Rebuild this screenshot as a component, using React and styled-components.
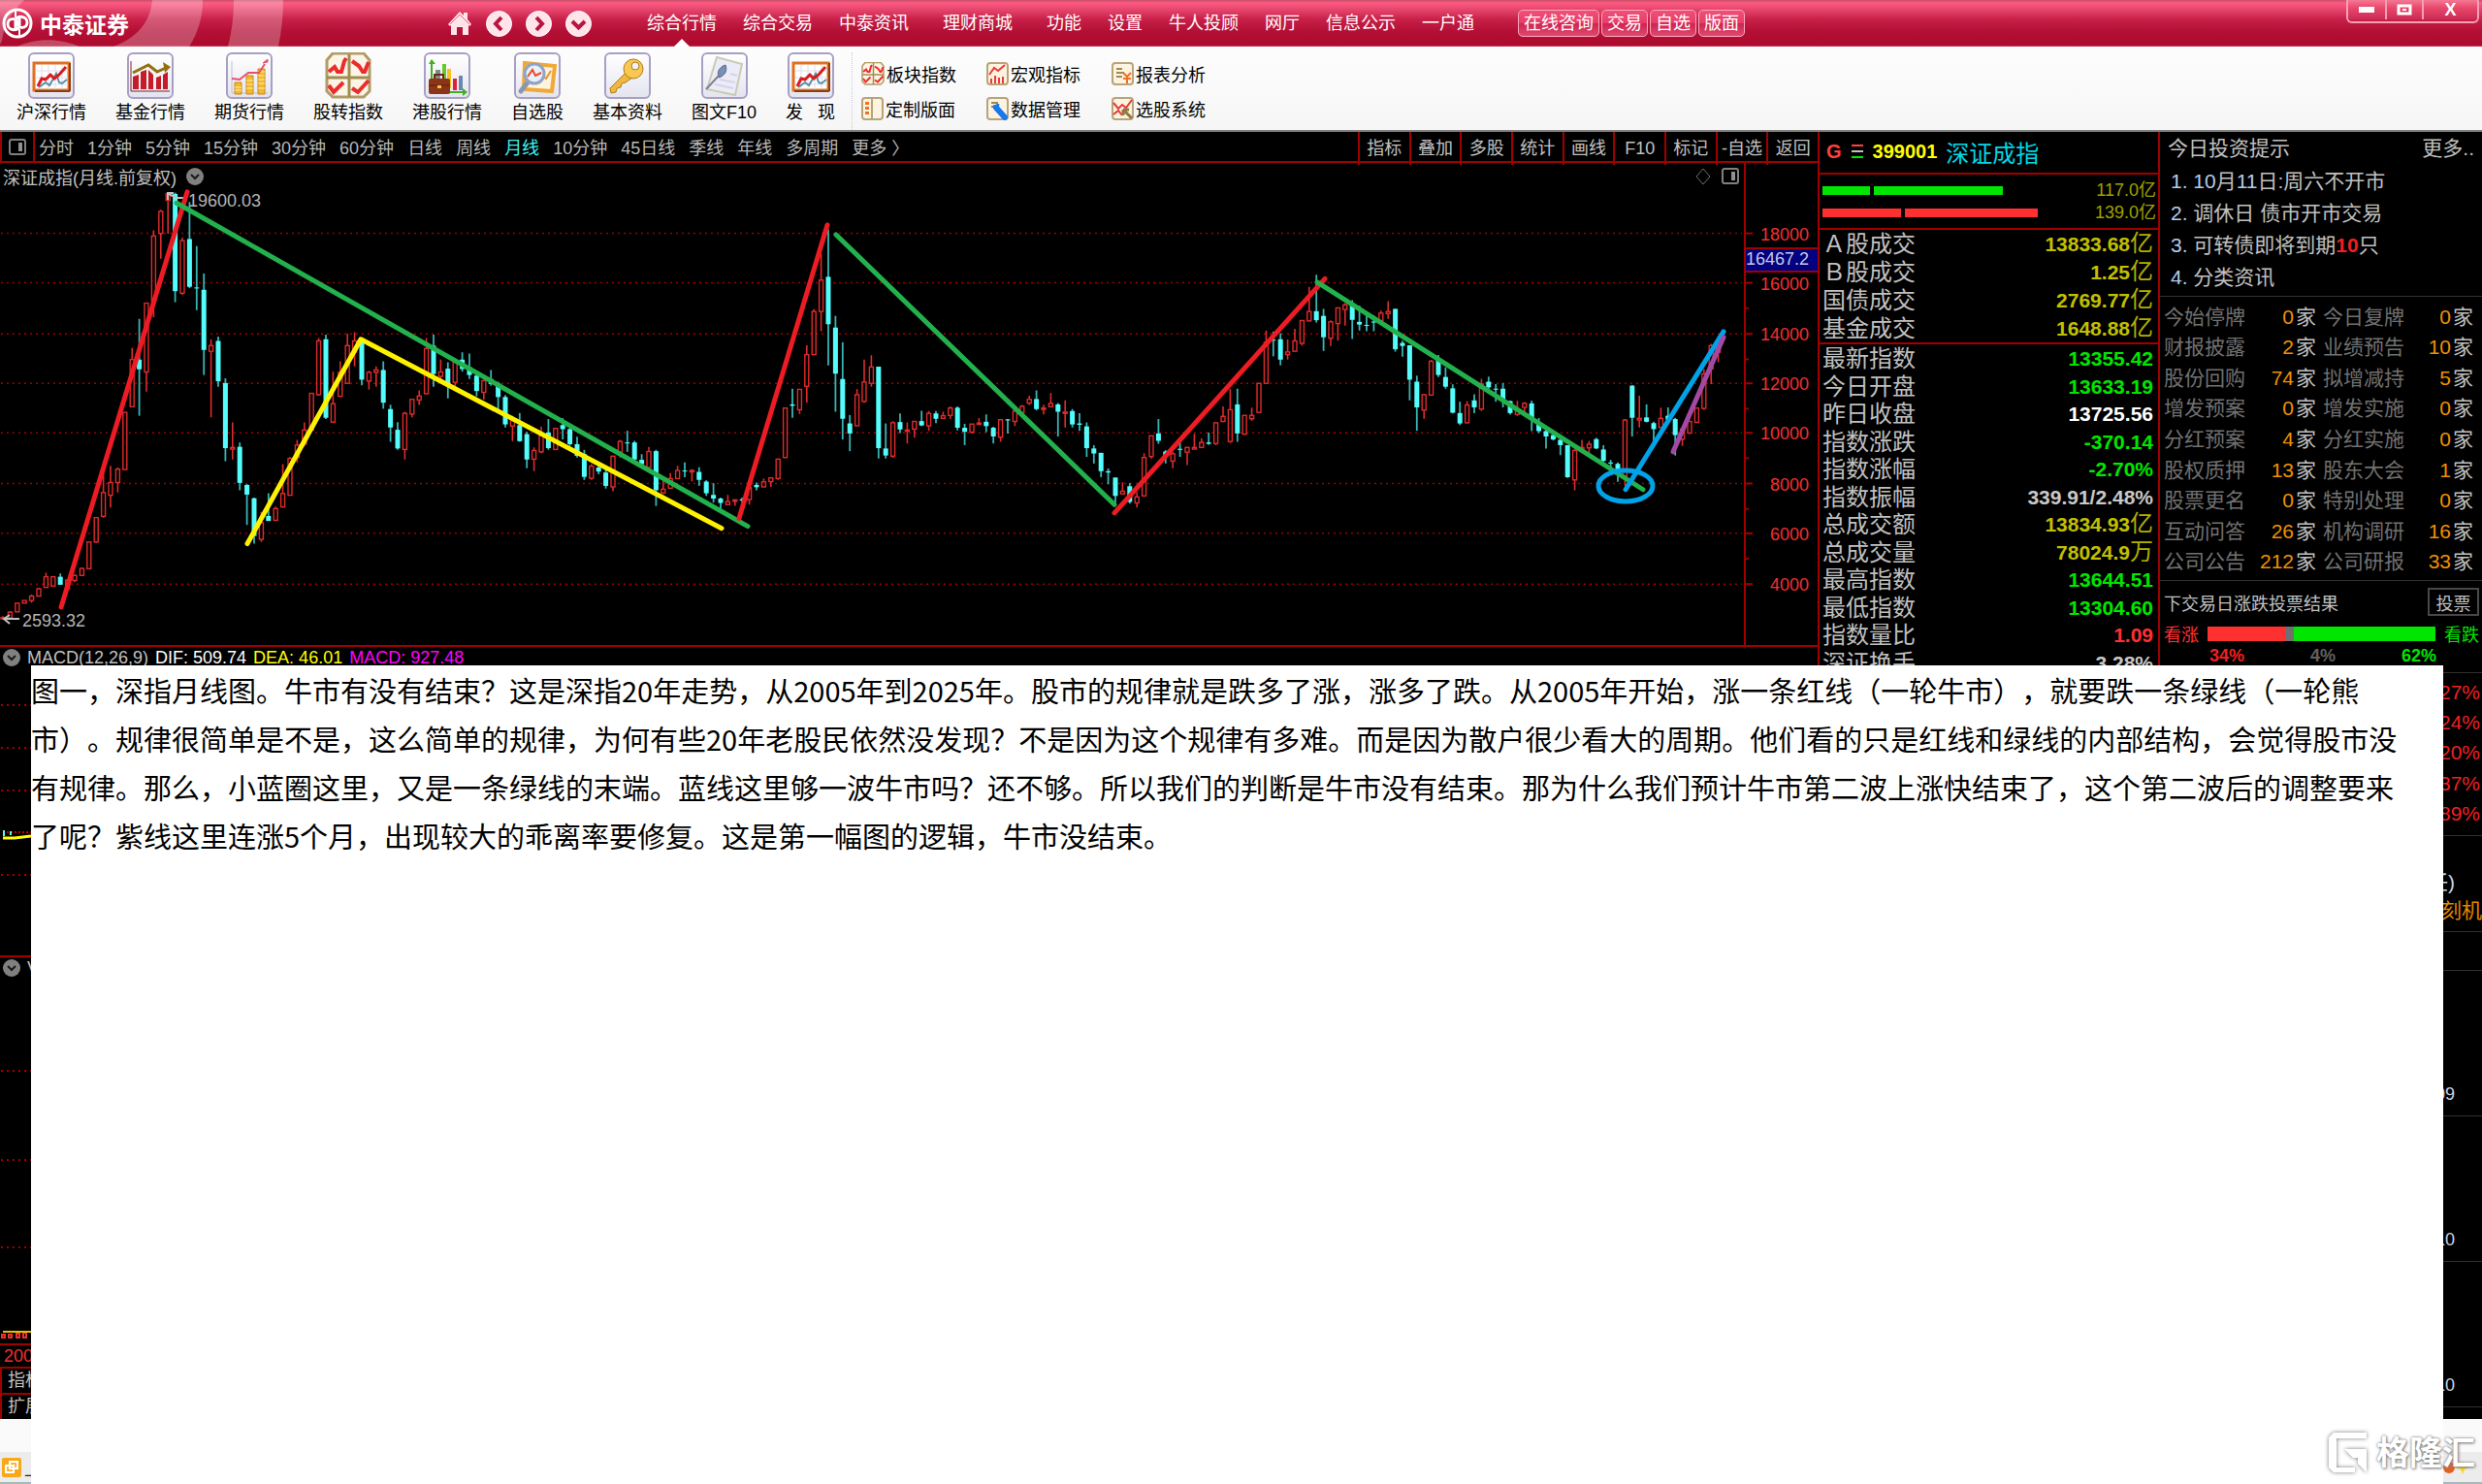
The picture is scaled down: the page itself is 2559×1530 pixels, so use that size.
import React from 'react';
import styled, { createGlobalStyle } from 'styled-components';

const GlobalStyle = createGlobalStyle`
  * { box-sizing: border-box; }
  body {
    margin: 0;
    background: #000;
    font-family: "Liberation Sans", "Noto Sans CJK SC", sans-serif;
    font-size: 18px;
    text-spacing-trim: space-all;
  }
  button {
    margin: 0;
    padding: 0;
    border: 0;
    background: none;
    font: inherit;
    color: inherit;
    white-space: nowrap;
  }
  a { color: inherit; text-decoration: none; }
  svg { display: block; flex: none; }
  table { border-collapse: collapse; }
  th, td { padding: 0; font-weight: normal; white-space: nowrap; }
`;

const line = '#a00000';

const Screen = styled.div`
  position: relative;
  display: flex;
  flex-direction: column;
  min-height: 100vh;
  overflow: hidden;
`;

/* ---------- title bar ---------- */

const TitleBar = styled.header`
  position: relative;
  display: flex;
  height: 48px;
  color: #fff;
  background: linear-gradient(#c4506c 0, #ff5a80 3px, #e84870 9px, #c82048 20px, #b41036 32px, #ac0a2c 46px, #c83058 48px);
`;

const Swoosh = styled.svg`
  position: absolute;
  left: 0;
  top: 0;
`;

const Brand = styled.div`
  position: relative;
  display: flex;
  align-items: center;
  gap: 7px;
  width: 461px;
  padding-left: 2px;
  font-size: 23px;
  font-weight: bold;
`;

const HomeButtons = styled.div`
  display: flex;
  align-items: center;
  gap: 14px;
  width: 206px;
`;

const Nav = styled.nav`
  display: flex;
  align-items: center;
  gap: 27px;
  height: 48px;
`;

const NavLink = styled.a`
  position: relative;
  padding: ${props => (props.$wide ? '0 8px' : '0')};
  line-height: 48px;
  &::after {
    content: "";
    display: ${props => (props.$active ? 'block' : 'none')};
    position: absolute;
    left: 50%;
    bottom: 0;
    margin-left: -8px;
    border: 8px solid transparent;
    border-top: 0;
    border-bottom-color: #fff;
  }
`;

const Pills = styled.div`
  display: flex;
  align-items: center;
  gap: 2px;
  margin-left: 45px;
`;

const Pill = styled.button`
  height: 28px;
  padding: 0 5px;
  border: 1px solid #f8a8bc;
  border-radius: 5px;
  background: linear-gradient(#f05078 0, #e83c68 50%, #cc2450 50%, #e04870 100%);
  line-height: 26px;
`;

const WindowButtons = styled.div`
  display: flex;
  height: 24px;
  margin-left: auto;
  margin-right: 3px;
  border: 2px solid #f4a0b4;
  border-top: 0;
  border-radius: 0 0 6px 6px;
`;

const WindowButton = styled.button`
  display: flex;
  align-items: center;
  justify-content: center;
  height: 20px;
  width: ${props => (props.$wide ? '57px' : '38px')};
  background: linear-gradient(#f47894 0, #e8486c 8px, #cc2c54 20px);
  font-size: 18px;
  font-weight: bold;
  & + & { border-left: 2px solid #f4a0b4; }
`;

/* ---------- toolbar ---------- */

const Toolbar = styled.div`
  display: flex;
  height: 88px;
  padding: 6px 0 0 17px;
  border-bottom: 2px solid #808080;
  background: linear-gradient(#fdfdfd, #f6f6f6);
  color: #000;
`;

const BigTools = styled.div`
  display: flex;
  gap: 30px;
  padding-right: 17px;
  border-right: 1px dotted #c8c8dc;
`;

const BigTool = styled.button`
  display: flex;
  flex-direction: column;
  align-items: center;
  white-space: pre;
  line-height: 28px;
`;

const ToolFrame = styled.span`
  display: flex;
  align-items: center;
  justify-content: center;
  width: 48px;
  height: 48px;
  border: ${props => (props.$bare ? '0' : '2px solid #a8a0c4')};
  border-radius: 6px;
  background: ${props => (props.$bare ? 'none' : 'linear-gradient(#fff, #e4e4f0)')};
`;

const SmallTools = styled.div`
  display: grid;
  grid-template-columns: repeat(3, 101px);
  grid-template-rows: 36px 36px;
  column-gap: 28px;
  padding: 4px 0 0 9px;
`;

const SmallTool = styled.button`
  display: flex;
  align-items: center;
  gap: 2px;
`;

/* ---------- body ---------- */

const Body = styled.main`
  display: flex;
  height: 1327px;
  color: #c0c0c0;
`;

const ChartColumn = styled.section`
  display: flex;
  flex: 1;
  flex-direction: column;
  min-width: 0;
`;

const PeriodBar = styled.div`
  display: flex;
  height: 32px;
  border-bottom: 2px solid ${line};
  line-height: 34px;
`;

const LayoutButton = styled.button`
  display: flex;
  align-items: center;
  justify-content: center;
  width: 36px;
  border: solid ${line};
  border-width: 0 2px;
`;

const Periods = styled.div`
  display: flex;
  flex: 1;
  gap: 14px;
  padding-left: 4px;
`;

const Period = styled.button`
  color: ${props => (props.$active ? '#40f0f0' : '#b8b8b8')};
`;

const ChartTools = styled.div`
  display: grid;
  grid-template-columns: repeat(9, 1fr);
  width: 474px;
`;

const ChartTool = styled.button`
  border-left: 2px solid ${line};
`;

const PlotRow = styled.div`
  position: relative;
  display: flex;
  height: 497px;
`;

const PlotTitle = styled.div`
  position: absolute;
  left: 3px;
  top: 0;
  display: flex;
  align-items: center;
  gap: 10px;
  height: 28px;
`;

const PlotTools = styled.div`
  position: absolute;
  right: 81px;
  top: 5px;
  display: flex;
  gap: 10px;
`;

const Plot = styled.svg`
  flex: 1;
  min-width: 0;
  width: 100%;
`;

const Axis = styled.svg`
  width: 76px;
`;

const SubPanel = styled.div`
  height: ${props => props.$height}px;
  border-top: 2px solid ${line};
`;

const SubTitle = styled.div`
  display: flex;
  align-items: center;
  gap: 7px;
  height: 22px;
  margin-bottom: 3px;
  padding-left: 3px;
`;

const DateRow = styled.div`
  height: 24px;
  padding-left: 4px;
  border-top: 2px solid ${line};
  color: #f03030;
  line-height: 22px;
`;

const TabRow = styled.div`
  height: 27px;
  padding-left: 6px;
  border: 2px solid ${line};
  border-bottom: 0;
  line-height: 24px;
`;

const Quote = styled.section`
  width: 351px;
  border-left: 2px solid ${line};
`;

const QuoteHead = styled.h1`
  display: flex;
  align-items: center;
  gap: 9px;
  height: 42px;
  margin: 0;
  padding: 0 0 2px 7px;
  font-size: 24px;
  font-weight: normal;
  color: #00d8e8;
`;

const Code = styled.span`
  font-size: 20px;
  font-weight: bold;
  color: ${props => props.$color};
`;

const Flows = styled.div`
  height: 59px;
  padding: 5px 2px 0 3px;
  border: solid ${line};
  border-width: 2px 0;
`;

const Flow = styled.div`
  display: flex;
  align-items: center;
  gap: 4px;
  height: 23px;
  color: #a0a000;
`;

const FlowBar = styled.span`
  width: ${props => props.$width}px;
  height: 9px;
  background: ${props => props.$color};
`;

const FlowValue = styled.span`
  margin-left: auto;
  padding-bottom: 6px;
`;

const QuoteTable = styled.table`
  width: 100%;
  height: ${props => props.$height}px;
  border-bottom: 2px solid ${line};
  th {
    padding: 2px 0 0 3px;
    font-size: 24px;
    line-height: 26px;
    text-align: left;
  }
  td {
    padding: 2px 5px 0 0;
    font-size: 21px;
    line-height: 26px;
    text-align: right;
  }
`;

const Value = styled.b`
  color: ${props => props.$color};
`;

const Unit = styled.span`
  font-size: 24px;
  line-height: 24px;
  color: #b0b000;
`;

const Info = styled.aside`
  width: 334px;
  border-left: 2px solid ${line};
  font-size: 21px;
  overflow: hidden;
`;

const InfoHead = styled.div`
  display: flex;
  justify-content: space-between;
  height: 34px;
  padding: 0 8px;
  line-height: 34px;
`;

const Tips = styled.ol`
  margin: 0;
  padding: 0 0 3px 11px;
  border-bottom: 1px solid #303030;
  list-style: none;
  line-height: 33px;
`;

const Num = styled.span`
  color: ${props => props.$color || '#b4ccec'};
`;

const Count = styled.span`
  margin-right: 2px;
  color: #f09000;
`;

const Stats = styled.div`
  padding: 5px 9px 3px 4px;
  border-bottom: 1px solid #303030;
  table {
    width: 100%;
    height: 284px;
  }
  th {
    width: 84px;
    color: #707070;
    text-align: left;
    line-height: 30px;
  }
  td {
    color: #c0c0c0;
    text-align: right;
    line-height: 30px;
  }
  td:nth-child(2) {
    width: 80px;
    padding-right: 7px;
  }
`;

const Vote = styled.div`
  height: 95px;
  padding: 0 3px 0 4px;
  border-bottom: 1px solid #303030;
  font-size: 18px;
`;

const VoteHead = styled.div`
  display: flex;
  align-items: center;
  justify-content: space-between;
  height: 43px;
`;

const VoteButton = styled.button`
  width: 53px;
  height: 29px;
  border: 2px solid #484848;
`;

const VoteBar = styled.div`
  display: flex;
  align-items: center;
  justify-content: space-between;
  height: 22px;
  color: #ff3030;
`;

const Meter = styled.div`
  width: 235px;
  height: 15px;
  background: linear-gradient(90deg, #ff3030 34%, #707070 34%, #707070 38%, #00e600 38%);
`;

const VoteNumbers = styled.div`
  display: flex;
  justify-content: space-between;
  height: 24px;
  padding: 0 44px 0 47px;
  line-height: 24px;
  font-weight: bold;
`;

const Movers = styled.div`
  display: grid;
  grid-template-rows: repeat(5, 1fr);
  align-items: center;
  height: 168px;
  padding: 4px 2px 6px;
  border-bottom: 1px solid #303030;
  color: #f02020;
  text-align: right;
`;

const InfoBox = styled.div`
  display: flex;
  flex-direction: column;
  justify-content: flex-end;
  height: ${props => props.$height}px;
  padding: 0 ${props => props.$pad || 0}px 7px 0;
  border-bottom: 1px solid #303030;
  font-size: ${props => (props.$pad ? 18 : 21)}px;
  line-height: 29px;
  text-align: right;
  color: #c8d4e4;
`;

const HotWord = styled.span`
  color: #e08800;
`;

const HotTag = styled.span`
  padding-right: 28px;
`;

/* ---------- bottom ---------- */

const StatusBar = styled.div`
  height: 34px;
  background: #fafafa;
`;

const TaskBar = styled.footer`
  display: flex;
  align-items: center;
  justify-content: space-between;
  height: 33px;
  padding: 0 12px 0 2px;
  border-bottom: 2px solid #a8b8b8;
  background: #ececec;
  color: #202020;
`;

const Task = styled.button`
  display: flex;
  align-items: center;
  gap: 3px;
`;

/* Sheet with the commentary, lies over the terminal */
const Note = styled.article`
  position: absolute;
  top: 686px;
  left: 32px;
  right: 40px;
  bottom: 0;
  padding: 0 32px 0 0;
  background: #fff;
  color: #000;
  font-family: "Noto Sans CJK SC", sans-serif;
  font-size: 29px;
  line-height: 50px;
  p { margin: 0; }
`;

const Watermark = styled.div`
  position: absolute;
  right: 7px;
  bottom: 8px;
  display: flex;
  align-items: center;
  gap: 8px;
  color: #fff;
  font-size: 34px;
  font-weight: bold;
  line-height: 48px;
  text-shadow: 0 0 3px #777, 1px 1px 3px #888;
  svg { filter: drop-shadow(0 0 2px #777); }
`;

/* ---------- data ---------- */

const navItems = ['综合行情', '综合交易', '中泰资讯', '理财商城', '功能', '设置', '牛人投顾', '网厅', '信息公示', '一户通'];
const pills = ['在线咨询', '交易', '自选', '版面'];
const periods = ['分时', '1分钟', '5分钟', '15分钟', '30分钟', '60分钟', '日线', '周线', '月线', '10分钟', '45日线', '季线', '年线', '多周期', '更多 〉'];
const chartTools = ['指标', '叠加', '多股', '统计', '画线', 'F10', '标记', '-自选', '返回'];

const green = '#00e600';
const gold = '#c0c000';

const turnover = [
  ['Ａ股成交', '13833.68', gold, '亿'],
  ['Ｂ股成交', '1.25', gold, '亿'],
  ['国债成交', '2769.77', gold, '亿'],
  ['基金成交', '1648.88', gold, '亿'],
];

const quotes = [
  ['最新指数', '13355.42', green],
  ['今日开盘', '13633.19', green],
  ['昨日收盘', '13725.56', '#fff'],
  ['指数涨跌', '-370.14', green],
  ['指数涨幅', '-2.70%', green],
  ['指数振幅', '339.91/2.48%', '#c8c8c8'],
  ['总成交额', '13834.93', gold, '亿'],
  ['总成交量', '78024.9', gold, '万'],
  ['最高指数', '13644.51', green],
  ['最低指数', '13304.60', green],
  ['指数量比', '1.09', '#ff3030'],
  ['深证换手', '3.28%', '#c8c8c8'],
];

const stats = [
  ['今始停牌', 0, '今日复牌', 0],
  ['财报披露', 2, '业绩预告', 10],
  ['股份回购', 74, '拟增减持', 5],
  ['增发预案', 0, '增发实施', 0],
  ['分红预案', 4, '分红实施', 0],
  ['股权质押', 13, '股东大会', 1],
  ['股票更名', 0, '特别处理', 0],
  ['互动问答', 26, '机构调研', 16],
  ['公司公告', 212, '公司研报', 33],
];

const movers = ['0.27%', '0.24%', '0.20%', '0.37%', '0.89%'];

// monthly bars: rising (1) or falling (0), high, body top, body bottom, low
const bars = [
  [1,1380,1384,1388,1390],[1,1365,1368,1385,1388],[1,1341,1341,1367,1367],[1,1333,1333,1341,1341],[1,1315,1320,1333,1340],
  [1,1295,1298,1320,1320],[1,1250,1262,1294,1294],[1,1262,1262,1290,1290],[0,1252,1262,1286,1286],[1,1270,1272,1298,1300],
  [1,1255,1258,1273,1278],[1,1235,1237,1258,1258],[1,1158,1158,1238,1238],[1,1083,1085,1158,1160],[1,940,1010,1081,1085],
  [1,930,980,1018,1055],[1,935,940,980,1010],[1,770,770,941,941],[1,577,612,753,753],[0,490,612,641,780],
  [1,443,443,649,708],[1,225,242,440,485],[1,163,168,234,310],[1,112,115,135,235],[0,112,116,407,440],
  [1,247,256,413,418],[0,140,251,394,398],[0,272,396,398,464],[0,354,403,583,658],[1,552,570,587,785],
  [0,543,556,677,693],[0,668,682,877,916],[1,800,875,880,911],[0,860,873,981,1003],[0,985,987,1016,1107],
  [0,1025,1027,1140,1163],[1,1068,1100,1150,1158],[0,1012,1080,1095,1095],[1,1052,1058,1093,1093],[1,925,1013,1053,1055],
  [1,903,908,1018,1018],[1,852,868,905,920],[1,800,823,865,870],[1,712,713,823,823],[1,547,556,717,720],
  [0,537,551,786,790],[1,648,744,799,802],[1,617,650,722,722],[1,534,570,683,683],[1,530,556,590,632],
  [0,550,556,672,689],[1,645,650,676,702],[1,632,643,650,693],[0,617,643,741,759],[0,747,760,815,858],
  [0,799,822,878,882],[1,768,773,881,911],[1,731,731,775,785],[1,704,721,733,748],[1,547,579,714,714],
  [0,537,570,655,693],[1,612,649,662,680],[0,620,639,690,728],[1,608,620,680,693],[0,590,612,640,648],
  [0,594,635,658,670],[0,655,660,706,722],[1,672,675,710,732],[0,643,670,685,690],[0,678,683,724,762],
  [0,718,724,806,815],[1,780,795,811,856],[0,772,808,856,858],[0,828,835,911,937],[1,875,884,910,946],
  [1,812,840,888,892],[0,790,830,877,882],[1,818,818,881,881],[0,787,808,820,851],[0,815,820,865,870],
  [0,843,865,900,905],[0,882,895,963,972],[1,925,931,967,972],[0,925,935,947,955],[0,930,950,990,998],
  [1,901,901,993,1006],[1,852,857,889,905],[0,825,860,862,888],[0,855,860,911,920],[0,895,912,925,935],
  [1,873,887,935,935],[0,882,886,1003,1050],[1,975,1000,1011,1015],[1,952,968,997,997],[1,930,944,968,968],
  [0,920,944,946,964],[1,940,944,948,976],[0,934,948,972,990],[0,973,977,1012,1020],[0,982,1017,1028,1040],
  [0,1025,1028,1041,1058],[1,1017,1037,1046,1046],[1,1030,1032,1036,1050],[0,1025,1030,1034,1040],[1,985,995,1031,1046],
  [0,980,987,994,1003],[1,968,978,993,993],[1,965,966,977,993],[1,908,910,968,972],[1,757,757,905,907],
  [0,699,746,750,786],[1,701,701,762,775],[1,569,597,692,741],[1,461,468,597,597],[1,295,374,468,527],
  [0,222,364,506,629],[0,481,516,654,768],[0,560,670,789,851],[0,778,803,833,886],[1,700,717,810,810],
  [1,612,679,737,741],[1,599,634,683,693],[0,633,633,877,908],[0,803,878,899,908],[1,796,801,901,907],
  [0,773,799,821,832],[1,800,823,825,863],[1,796,797,820,846],[0,765,796,809,811],[1,766,773,810,825],
  [0,766,773,789,802],[1,768,780,788,788],[1,752,757,779,789],[0,752,756,816,824],[0,804,816,828,868],
  [1,804,805,829,833],[1,787,802,806,806],[0,776,798,811,829],[0,813,816,842,863],[1,792,792,844,858],
  [0,790,791,794,833],[1,766,766,797,811],[1,748,752,770,772],[1,720,731,742,748],[0,704,730,760,764],
  [1,747,757,761,776],[1,712,743,753,753],[0,742,746,768,842],[1,734,769,773,815],[0,760,766,806,815],
  [0,772,803,807,825],[0,800,812,877,903],[0,868,878,893,923],[0,891,891,946,964],[0,938,946,950,985],
  [0,965,965,1020,1050],[1,979,1006,1014,1016],[0,982,991,1038,1043],[1,1008,1023,1041,1055],[1,892,905,1020,1020],
  [1,840,840,902,908],[0,790,833,855,864],[0,883,887,900,923],[1,888,894,916,937],[0,860,879,882,903],
  [1,873,875,889,928],[1,834,875,880,880],[1,848,860,875,877],[0,830,860,864,867],[1,801,801,863,868],
  [1,752,782,797,799],[1,700,762,857,862],[0,699,746,833,858],[1,779,779,835,838],[1,756,779,789,795],
  [1,683,683,770,770],[1,525,560,683,683],[0,528,552,555,602],[0,533,551,612,629],[1,552,589,597,612],
  [1,520,556,587,589],[1,495,495,563,570],[1,394,468,496,498],[0,358,467,494,501],[0,460,481,545,586],
  [1,494,499,548,571],[1,457,457,504,555],[1,443,448,462,510],[0,434,445,493,550],[0,450,499,507,525],
  [0,470,508,510,527],[0,480,498,501,527],[1,465,473,495,497],[1,437,468,474,490],[0,460,460,581,588],
  [0,555,562,571,603],[0,569,569,672,734],[0,660,678,755,825],[1,715,717,763,789],[1,613,617,718,720],
  [0,598,612,658,664],[0,635,664,693,699],[0,686,698,771,773],[0,738,772,803,808],[1,736,748,801,803],
  [0,716,734,755,772],[1,669,685,760,765],[0,663,678,695,700],[0,685,699,702,738],[0,682,699,735,755],
  [0,735,736,772,777],[1,735,765,776,780],[1,739,743,755,768],[0,735,743,790,826],[0,787,800,826,832],
  [0,820,826,842,878],[0,828,838,851,854],[0,850,852,868,898],[0,868,868,964,966],[1,878,884,972,1003],
  [1,852,875,880,890],[1,855,865,876,892],[0,846,850,878,880],[0,868,881,915,920],[0,912,920,923,936],
  [0,920,924,957,978],[1,790,793,960,990],[0,688,690,786,842],[1,720,788,793,815],[0,746,785,798,800],
  [0,798,802,820,870],[1,756,788,815,815],[0,755,780,792,800],[0,786,790,838,899],[1,818,820,850,870],
  [1,795,797,832,834],[1,755,757,800,802],[1,640,655,758,763],[1,565,570,640,685],[1,540,560,590,620],
];

const levels = [
  [234, 18000], [382, 16000], [535, 14000], [683, 12000],
  [831, 10000], [983, 8000], [1132, 6000], [1284, 4000],
];

const trends = [
  ['#ed1c24', [[63, 1353], [193, 110]]],
  ['#22b14c', [[182, 143], [771, 1111]]],
  ['#fff200', [[255, 1163], [372, 551], [744, 1117]]],
  ['#ed1c24', [[762, 1087], [853, 209]]],
  ['#22b14c', [[862, 238], [1149, 1046]]],
  ['#ed1c24', [[1149, 1071], [1366, 370]]],
  ['#22b14c', [[1358, 380], [1694, 1001]]],
  ['#00a2e8', [[1676, 1001], [1777, 528]]],
  ['#a349a4', [[1725, 888], [1777, 545]]],
];

const toX = i => 3 + i * 7.4;
const toY = v => v * 0.3444 - 8;

/* ---------- drawings ---------- */

function ArrowBadge() {
  return (
    <svg width="18" height="18" viewBox="0 0 18 18">
      <circle cx="9" cy="9" r="9" fill="#808080" />
      <path d="M5 7l4 4 4-4" fill="none" stroke="#181818" strokeWidth="2" />
    </svg>
  );
}

function PanelIcon() {
  return (
    <svg width="18" height="17" viewBox="0 0 18 17">
      <rect x="1" y="1" width="16" height="15" rx="2" fill="none" stroke="#808080" strokeWidth="2" />
      <rect x="10" y="4" width="4" height="9" fill="#909090" />
    </svg>
  );
}

function RoundIcon({ d }) {
  return (
    <svg width="27" height="27" viewBox="0 0 27 27">
      <circle cx="13.5" cy="13.5" r="13" fill="#ffe4ea" stroke="#fff" />
      <path d={d} fill="none" stroke="#b81440" strokeWidth="4" />
    </svg>
  );
}

function BoardChart() {
  return (
    <svg width="44" height="44" viewBox="0 0 44 44">
      <rect x="4" y="9" width="36" height="28" fill="#fff" stroke="#e07020" strokeWidth="3" />
      <path d="M5 38h36M41 9v29" stroke="#8c4010" strokeWidth="2" />
      <path d="M12 11v25M19 11v25M26 11v25M33 11v25M6 17h33M6 24h33M6 31h33" stroke="#dde" />
      <path d="M9 34l7-5 4 3 7-12 3 9 3 1 5-4" fill="none" stroke="#5890a8" strokeWidth="2" />
      <path d="M8 33l4-8 4 1 5-5 4 4 5-4 7-8" fill="none" stroke="#d81c1c" strokeWidth="3" />
    </svg>
  );
}

function FundChart() {
  return (
    <svg width="44" height="44" viewBox="0 0 44 44">
      <path d="M2 7v31h40" fill="none" stroke="#802020" />
      <path d="M4 23l6-2v15H4zM12 18l6-2v20h-6zM20 16l5 5v15h-5zM28 24l5-2v14h-5zM35 21l5-3v18h-5z" fill="#c41c28" />
      <path d="M4 19l16-8 9 7 11-5" fill="none" stroke="#907010" strokeWidth="3" />
      <path d="M35 8l8 5-6 6z" fill="#907010" />
    </svg>
  );
}

function FutureChart() {
  return (
    <svg width="44" height="44" viewBox="0 0 44 44">
      <path d="M4 7v33h37" fill="none" stroke="#c0c0d0" />
      <path d="M7 29h7v12H7zM19 22h7v19h-7zM31 15h7v26h-7z" fill="#f4b830" stroke="#c88810" />
      <path d="M7 34h7M7 37h7M19 27h7M19 31h7M19 35h7M31 18h7M31 22h7M31 26h7M31 30h7M31 35h7" stroke="#fff0a0" />
      <path d="M4 25l8 1 9-7h11l6-9" fill="none" stroke="#e85070" strokeWidth="2" />
      <path d="M36 9l5-1v-3z" fill="#e85070" stroke="#e85070" />
    </svg>
  );
}

function FourCharts({ size = 48 }) {
  return (
    <svg width={size} height={size} viewBox="0 0 48 48">
      <path d="M8 1h32l6 7v32l-6 6H8l-6-6V8z" fill="#fcf4e4" stroke="#b09c68" strokeWidth="3" />
      <path d="M25 2v44M2 26h44" stroke="#a08c50" strokeWidth="3" />
      <path d="M4 20l6-5 3 5h4l3-11 2-3M28 9l7 5 4 6h2l4-10M4 34l5 7 10-10M28 37l6 4 11-12" fill="none" stroke="#ec2c2c" strokeWidth="4" />
    </svg>
  );
}

function CaseChart() {
  return (
    <svg width="44" height="44" viewBox="0 0 44 44">
      <path d="M6 6v33h34" fill="none" stroke="#40b020" strokeWidth="2" />
      <path d="M3 10l3-5 4 5zM38 35l5 4-5 4z" fill="#40b020" />
      <path d="M10 16h5v10h-5z" fill="#808890" />
      <path d="M17 10h4v16h-4z" fill="#68c828" />
      <path d="M22 15h4v20h-4z" fill="#f8c020" />
      <path d="M28 25h4v12h-4z" fill="#e02038" />
      <path d="M34 22h4v15h-4z" fill="#6888b0" />
      <rect x="3" y="25" width="22" height="16" rx="2" fill="#8c3418" />
      <path d="M9 25v-4h9v4" fill="none" stroke="#702810" strokeWidth="2" />
      <path d="M3 32h22" stroke="#601c08" />
      <path d="M12 32h4v3h-4z" fill="#f0c840" />
    </svg>
  );
}

function LensChart() {
  return (
    <svg width="44" height="44" viewBox="0 0 44 44">
      <path d="M9 9l31 3-3 26-29-2z" fill="#fff4dc" stroke="#f0a838" strokeWidth="4" />
      <path d="M22 29l5-7 4 3 5-8" fill="none" stroke="#f09030" strokeWidth="2" />
      <path d="M5 38l7-9" stroke="#8898b0" strokeWidth="5" strokeLinecap="round" />
      <circle cx="19" cy="20" r="10" fill="#e8f0fc" stroke="#90a4c4" strokeWidth="3" />
      <path d="M12 23l5-7 3 6 6-3" fill="none" stroke="#f04820" strokeWidth="2" />
    </svg>
  );
}

function KeyIcon() {
  return (
    <svg width="44" height="44" viewBox="0 0 44 44">
      <path d="M22 17L4 35l1 5 5-1 1-4 4-1 1-4 4-1 7-5" fill="#f0b840" stroke="#b07c18" />
      <circle cx="28" cy="15" r="10" fill="#f8c850" stroke="#b07c18" />
      <circle cx="30" cy="12" r="4" fill="#f0f0f8" stroke="#b07c18" />
    </svg>
  );
}

function PenNote() {
  return (
    <svg width="44" height="44" viewBox="0 0 44 44">
      <path d="M14 3l26 7-7 32-29-6z" fill="#ececf8" stroke="#c8ccb4" strokeWidth="2" />
      <path d="M12 31l19 4M17 26l16 3M28 20l7 2" stroke="#d4d4e8" strokeWidth="2" />
      <path d="M23 11c-7 2-9 8-7 13 7-2 9-8 7-13z" fill="#7890b4" stroke="#50648c" />
      <path d="M17 21L3 36" stroke="#808090" strokeWidth="2" />
    </svg>
  );
}

const bigTools = [
  ['沪深行情', BoardChart], ['基金行情', FundChart], ['期货行情', FutureChart],
  ['股转指数', FourCharts], ['港股行情', CaseChart], ['自选股', LensChart],
  ['基本资料', KeyIcon], ['图文F10', PenNote], ['发   现', BoardChart],
];

function SmallIcon({ children }) {
  return (
    <svg width="23" height="24" viewBox="0 0 23 24">
      <rect x="1" y="1" width="21" height="22" rx="3" fill="#fcf4e0" stroke="#b8a478" strokeWidth="2" />
      {children}
    </svg>
  );
}

const smallTools = [
  ['板块指数', <FourCharts key="a" size={24} />],
  ['宏观指标', <SmallIcon key="b"><path d="M3 13l5-7 4 3 7-6M5 22v-5M9 22v-8M13 22v-6M17 22v-7" fill="none" stroke="#f03838" strokeWidth="2" /></SmallIcon>],
  ['报表分析', <SmallIcon key="c"><path d="M5 7h6M5 11h8M5 15h6" stroke="#a08850" strokeWidth="2" /><path d="M12 11l4 4 4-4M16 15v7M12 17h8" fill="none" stroke="#f07020" strokeWidth="2" /></SmallIcon>],
  ['定制版面', <SmallIcon key="d"><path d="M11 2v20" stroke="#b8a478" strokeWidth="2" /><path d="M6 5v14" stroke="#f07020" strokeWidth="4" strokeDasharray="3 2" /></SmallIcon>],
  ['数据管理', <SmallIcon key="e"><path d="M5 6h7M5 10h5" stroke="#a08850" strokeWidth="2" /><path d="M10 11l9 10" stroke="#1878f0" strokeWidth="6" strokeLinecap="round" /><path d="M7 9l4 3 1-5" fill="none" stroke="#1878f0" strokeWidth="3" /></SmallIcon>],
  ['选股系统', <SmallIcon key="f"><path d="M2 6l5 6 4-4 4 3 6-8M2 18l5-4 4 5" fill="none" stroke="#e83838" strokeWidth="2" /><path d="M12 13l9 9M12 13v6M12 13h6" stroke="#907840" strokeWidth="3" /></SmallIcon>],
];

function Candle({ index, bar }) {
  const [up, high, top, bottom, low] = bar;
  const x = toX(index);
  const bodyHeight = Math.max(toY(bottom) - toY(top), 1);
  if (up) {
    return (
      <g stroke="#dc2c2c">
        <path d={`M${x} ${toY(high)}V${toY(top)}M${x} ${toY(bottom)}V${toY(low)}`} strokeWidth="1.6" />
        <rect x={x - 2} y={toY(top)} width="4" height={bodyHeight} fill="#000" strokeWidth="1.4" />
      </g>
    );
  }
  return (
    <g>
      <path d={`M${x} ${toY(high)}V${toY(low)}`} stroke="#38b4b4" strokeWidth="1.8" />
      <rect x={x - 2.5} y={toY(top)} width="5" height={bodyHeight} fill="#54fcfc" />
    </g>
  );
}

function PriceChart() {
  return (
    <PlotRow>
      <Plot viewBox="0 0 1798 497" preserveAspectRatio="none" height="497">
        {levels.map(([v]) =>
          <path key={v} d={`M1 ${toY(v)}H1796`} stroke="#a00000" strokeWidth="1.5" strokeDasharray="2 4" />
        )}
        {bars.map((bar, idx) => <Candle key={idx} index={idx} bar={bar} />)}
        <g fill="none" stroke="#c0c0c0" strokeWidth="2">
          <path d="M179 31h-6v7M174 32l8 4h11" />
          <path d="M10 466l-6 4 6 5M4 470h16" />
        </g>
        <g fill="#b4b4b4" fontSize="18">
          <text x="194" y="45">19600.03</text>
          <text x="23" y="478">2593.32</text>
        </g>
        {trends.map(([color, points], idx) =>
          <polyline
            key={idx}
            points={points.map(([x, v]) => `${x},${toY(v)}`).join(' ')}
            fill="none" stroke={color} strokeWidth="5" strokeLinecap="round" strokeLinejoin="round"
          />
        )}
        <ellipse cx="1676" cy={toY(990)} rx="28" ry="16" fill="none" stroke="#00a2e8" strokeWidth="5" />
      </Plot>
      <Axis viewBox="0 0 76 497" height="497">
        <path d="M1 0V497" stroke={line} strokeWidth="2" />
        {levels.map(([v, price]) =>
          <g key={price}>
            <path d={`M1 ${toY(v)}h8`} stroke={line} strokeWidth="2" />
            {v > 300 && v < 1284 && <path d={`M1 ${toY(v + 76)}h4`} stroke={line} strokeWidth="2" />}
            <text x="67" y={toY(v) + 7} fill="#f03030" fontSize="18" textAnchor="end">{price}</text>
          </g>
        )}
        <rect x="1" y="88" width="76" height="24" fill="#000080" stroke={line} strokeWidth="2" />
        <text x="67" y="105" fill="#c8c8e0" fontSize="18" textAnchor="end">16467.2</text>
      </Axis>
      <PlotTitle>深证成指(月线.前复权)<ArrowBadge /></PlotTitle>
      <PlotTools>
        <svg width="18" height="18" viewBox="0 0 18 18">
          <path d="M9 1l7 8-7 8-7-8z" fill="none" stroke="#707070" />
        </svg>
        <PanelIcon />
      </PlotTools>
    </PlotRow>
  );
}

function QuoteRows({ rows, height }) {
  return (
    <QuoteTable $height={height}>
      <tbody>
        {rows.map(([label, value, color, unit]) =>
          <tr key={label}>
            <th scope="row">{label}</th>
            <td><Value $color={color}>{value}</Value>{unit && <Unit>{unit}</Unit>}</td>
          </tr>
        )}
      </tbody>
    </QuoteTable>
  );
}

function Header() {
  return (
    <TitleBar>
      <Swoosh width="300" height="48" viewBox="0 0 300 48" fill="#fff" fillOpacity="0.26">
        <path d="M0 0h25C12 12 4 26 2 42l-2 4z" />
        <path d="M157 0h52c0 18-5 34-14 48h-78c24-9 38-25 40-48z" />
        <path d="M241 0h51c0 17-2 33-5 48h-52c4-15 6-31 6-48z" />
        <path d="M18 48c18-9 44-9 64 0z" />
      </Swoosh>
      <Brand>
        <svg width="32" height="32" viewBox="0 0 32 32" fill="none" stroke="#fff" strokeWidth="3">
          <circle cx="16" cy="16" r="14" />
          <path d="M14 2v8M18 22v8" strokeWidth="2" />
          <path d="M18 9v9c0 7-12 6-12-1s9-7 10-1M14 23v-9c0-7 12-6 12 1s-9 7-10 1" />
        </svg>
        中泰证券
      </Brand>
      <HomeButtons>
        <button aria-label="首页">
          <svg width="26" height="26" viewBox="0 0 26 26" fill="#ffe4ea">
            <path d="M13 1l4 4V2h4v7l4 5-2 2-1-1v10h-6v-8h-6v8H4V15l-1 1-2-2z" />
            <path d="M3 14L13 4l10 10" fill="none" stroke="#f06080" />
          </svg>
        </button>
        <button aria-label="后退"><RoundIcon d="M16 7l-6 6.500 6 6.500" /></button>
        <button aria-label="前进"><RoundIcon d="M11 7l6 6.500-6 6.500" /></button>
        <button aria-label="展开"><RoundIcon d="M7 11l6.500 6.500 6.500-6.500" /></button>
      </HomeButtons>
      <Nav>
        {navItems.map((item, idx) =>
          <NavLink key={item} href="#" $active={idx === 0} $wide={idx === 3}>{item}</NavLink>
        )}
      </Nav>
      <Pills>
        {pills.map(item => <Pill key={item}>{item}</Pill>)}
      </Pills>
      <WindowButtons>
        <WindowButton aria-label="最小化">
          <svg width="16" height="6" viewBox="0 0 16 6"><rect width="16" height="6" fill="#fff" /></svg>
        </WindowButton>
        <WindowButton aria-label="最大化">
          <svg width="16" height="12" viewBox="0 0 16 12">
            <path d="M2 2h12v8H2z" fill="none" stroke="#fff" strokeWidth="3" />
            <path d="M6 5h4v2H6z" fill="#fff" />
          </svg>
        </WindowButton>
        <WindowButton $wide>X</WindowButton>
      </WindowButtons>
    </TitleBar>
  );
}

export default function App() {
  return (
    <Screen>
      <GlobalStyle />
      <Header />
      <Toolbar>
        <BigTools>
          {bigTools.map(([label, Icon]) =>
            <BigTool key={label}>
              <ToolFrame $bare={Icon === FourCharts}><Icon /></ToolFrame>
              {label}
            </BigTool>
          )}
        </BigTools>
        <SmallTools>
          {smallTools.map(([label, icon]) => <SmallTool key={label}>{icon}{label}</SmallTool>)}
        </SmallTools>
      </Toolbar>

      <Body>
        <ChartColumn>
          <PeriodBar>
            <LayoutButton aria-label="布局"><PanelIcon /></LayoutButton>
            <Periods>
              {periods.map(item => <Period key={item} $active={item === '月线'}>{item}</Period>)}
            </Periods>
            <ChartTools>
              {chartTools.map(item => <ChartTool key={item}>{item}</ChartTool>)}
            </ChartTools>
          </PeriodBar>
          <PriceChart />
          <SubPanel $height={320}>
            <SubTitle>
              <ArrowBadge />
              <span>MACD(12,26,9)</span>
              <Num $color="#fff">DIF: 509.74</Num>
              <Num $color="#ff0">DEA: 46.01</Num>
              <Num $color="#f0f">MACD: 927.48</Num>
            </SubTitle>
            <svg width="32" height="290" viewBox="0 0 32 290" fill="none">
              <path d="M1 35h31M1 79h31M1 123h31M1 210h31" stroke="#a00000" strokeWidth="2" strokeDasharray="2 4" />
              <path d="M3 166h29" stroke="#c00000" strokeWidth="2" strokeDasharray="2 2" />
              <path d="M3 172h12l17-2" stroke="#ff0" strokeWidth="3" />
              <path d="M4 164v6M11 165v4" stroke="#54fcfc" strokeWidth="2" />
            </svg>
          </SubPanel>
          <SubPanel $height={400}>
            <SubTitle><ArrowBadge />VOL</SubTitle>
            <svg width="32" height="372" viewBox="0 0 32 372" fill="none">
              <path d="M1 92h31M1 184h31M1 274h31" stroke="#a00000" strokeWidth="2" strokeDasharray="2 4" />
              <path d="M2 364h3v3H2zM9 364h3v3H9zM17 363h3v4h-3zM24 362h3v5h-3z" stroke="#f03030" strokeWidth="2" />
              <path d="M3 361h29" stroke="#e0c000" strokeWidth="2" />
            </svg>
          </SubPanel>
          <DateRow>2005年</DateRow>
          <TabRow>指标</TabRow>
          <TabRow>扩展</TabRow>
        </ChartColumn>

        <Quote>
          <QuoteHead>
            <Code $color="#ff4040">G</Code>
            <svg width="14" height="16" viewBox="0 0 14 16" strokeWidth="2">
              <path d="M1 2h12" stroke="#ff4040" />
              <path d="M1 8h12" stroke="#c0c0c0" />
              <path d="M1 14h12" stroke="#00e600" />
            </svg>
            <Code $color="#ff0">399001</Code>
            深证成指
          </QuoteHead>
          <Flows>
            <Flow>
              <FlowBar $width={49} $color={green} /><FlowBar $width={133} $color={green} />
              <FlowValue>117.0亿</FlowValue>
            </Flow>
            <Flow>
              <FlowBar $width={81} $color="#ff3030" /><FlowBar $width={137} $color="#ff3030" />
              <FlowValue>139.0亿</FlowValue>
            </Flow>
          </Flows>
          <QuoteRows rows={turnover} height={118} />
          <QuoteRows rows={quotes} height={344} />
        </Quote>

        <Info>
          <InfoHead><span>今日投资提示</span><a href="#">更多..</a></InfoHead>
          <Tips>
            <li><Num>1.</Num> <Num>10</Num>月<Num>11</Num>日:周六不开市</li>
            <li><Num>2.</Num> 调休日 债市开市交易</li>
            <li><Num>3.</Num> 可转债即将到期<Num as="b" $color="#f02020">10</Num>只</li>
            <li><Num>4.</Num> 分类资讯</li>
          </Tips>
          <Stats>
            <table>
              <tbody>
                {stats.map(([a, n, b, m]) =>
                  <tr key={a}>
                    <th scope="row">{a}</th>
                    <td><Count>{n}</Count>家</td>
                    <th scope="row">{b}</th>
                    <td><Count>{m}</Count>家</td>
                  </tr>
                )}
              </tbody>
            </table>
          </Stats>
          <Vote>
            <VoteHead>下交易日涨跌投票结果<VoteButton>投票</VoteButton></VoteHead>
            <VoteBar>看涨<Meter /><Num $color={green}>看跌</Num></VoteBar>
            <VoteNumbers>
              <Num $color="#f02020">34%</Num>
              <Num $color="#606060">4%</Num>
              <Num $color={green}>62%</Num>
            </VoteNumbers>
          </Vote>
          <Movers>
            {movers.map(item => <span key={item}>{item}</span>)}
          </Movers>
          <InfoBox $height={99}><HotTag>(责任)</HotTag><HotWord>光刻机</HotWord></InfoBox>
          <InfoBox $height={40} />
          <InfoBox $height={150} $pad={28}>09</InfoBox>
          <InfoBox $height={150} $pad={28}>10</InfoBox>
          <InfoBox $height={150} $pad={28}>10</InfoBox>
        </Info>
      </Body>

      <StatusBar />
      <TaskBar>
        <Task>
          <svg width="20" height="20" viewBox="0 0 20 20">
            <rect width="20" height="20" rx="2" fill="#f8a818" />
            <path d="M8 4h8v7H8zM4 8h8v7H4z" fill="#f8b840" stroke="#fff" strokeWidth="2" />
          </svg>
          上证
        </Task>
        <svg width="28" height="20" viewBox="0 0 28 20">
          <circle cx="6" cy="10" r="6" fill="#e86020" />
          <path d="M20 3l2 5 5 2-5 2-2 5-2-5-5-2 5-2z" fill="#f8d820" />
        </svg>
      </TaskBar>

      <Note>
        <p>
          图一，深指月线图。牛市有没有结束？这是深指20年走势，从2005年到2025年。股市的规律就是跌多了涨，涨多了跌。从2005年开始，涨一条红线（一轮牛市），就要跌一条绿线（一轮熊市）。规律很简单是不是，这么简单的规律，为何有些20年老股民依然没发现？不是因为这个规律有多难。而是因为散户很少看大的周期。他们看的只是红线和绿线的内部结构，会觉得股市没有规律。那么，小蓝圈这里，又是一条绿线的末端。蓝线这里够一波牛市吗？还不够。所以我们的判断是牛市没有结束。那为什么我们预计牛市第二波上涨快结束了，这个第二波后的调整要来了呢？紫线这里连涨5个月，出现较大的乖离率要修复。这是第一幅图的逻辑，牛市没结束。
        </p>
      </Note>
      <Watermark>
        <svg width="42" height="44" viewBox="0 0 42 44" fill="#fff">
          <path d="M6 1h34v6H9v30h19v5H6l-5-5V6z" />
          <path d="M17 18h23v24l-9-9v-6h-5z" />
        </svg>
        格隆汇
      </Watermark>
    </Screen>
  );
}
